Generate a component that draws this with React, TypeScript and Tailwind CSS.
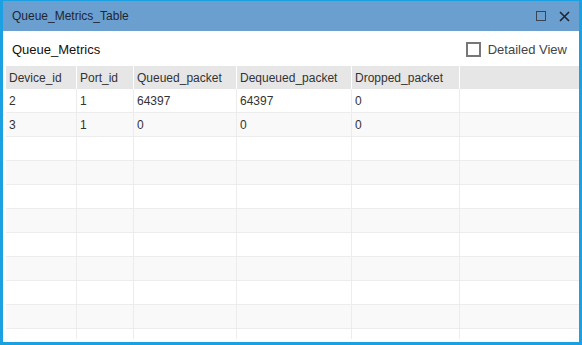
const columns = [
  { name: "Device_id", w: "w-[71px]" },
  { name: "Port_id", w: "w-[57px]" },
  { name: "Queued_packet", w: "w-[103px]" },
  { name: "Dequeued_packet", w: "w-[115px]" },
  { name: "Dropped_packet", w: "w-[108px]" },
  { name: "", w: "w-[116px]" },
];

const rows: string[][] = [
  ["2", "1", "64397", "64397", "0", ""],
  ["3", "1", "0", "0", "0", ""],
];

const totalRows = 11;

export default function App() {
  const body = Array.from({ length: totalRows }, (_, i) => rows[i] ?? ["", "", "", "", "", ""]);

  return (
    <div
      className="h-[345px] w-[582px] overflow-hidden bg-[#1ba1e2] px-[3px] pt-px pb-[3px] text-[#333]"
      style={{ fontFamily: '"Liberation Sans", Arial, sans-serif' }}
    >
      <div className="flex h-full flex-col bg-white">
        {/* title bar */}
        <div className="flex h-[30px] shrink-0 items-center bg-[#6a9fcf] pl-[9px] pr-[9px]">
          <span className="text-[12px] text-[#1e2633]">Queue_Metrics_Table</span>
          <div className="ml-auto flex items-center gap-[13px]">
            <div className="h-[10px] w-[10px] border border-[#3a4453]" />
            <svg width="11" height="11" viewBox="0 0 11 11" className="text-[#1e2633]">
              <path d="M1 1 L10 10 M10 1 L1 10" stroke="currentColor" strokeWidth="1.6" />
            </svg>
          </div>
        </div>

        {/* caption row */}
        <div className="flex h-[35px] shrink-0 items-center pt-[2px] pl-[9px] pr-[12px]">
          <span className="text-[13px] text-[#111]">Queue_Metrics</span>
          <label className="ml-auto flex items-center gap-[7px]">
            <span className="h-[15px] w-[15px] border-2 border-[#777]" />
            <span className="text-[13px] text-[#444]">Detailed View</span>
          </label>
        </div>

        {/* table */}
        <div className="flex-1 overflow-hidden pl-[3px]">
          <div className="flex h-[23px] bg-[#e6e6e6]">
            {columns.map((c, i) => (
              <div
                key={i}
                className={`${c.w} flex items-center border-r border-white pl-[3px] text-[12px] text-[#333] last:border-r-0`}
              >
                {c.name}
              </div>
            ))}
          </div>
          {body.map((r, ri) => (
            <div
              key={ri}
              className={`flex h-[24px] border-b border-[#ececec] ${ri % 2 === 1 ? "bg-[#f9f9f9]" : "bg-white"}`}
            >
              {columns.map((c, ci) => (
                <div
                  key={ci}
                  className={`${c.w} flex items-center border-r border-[#ececec] pl-[3px] text-[12px] text-[#333] last:border-r-0`}
                >
                  {r[ci]}
                </div>
              ))}
            </div>
          ))}
        </div>
        <div className="h-[3px] shrink-0" />
      </div>
    </div>
  );
}
